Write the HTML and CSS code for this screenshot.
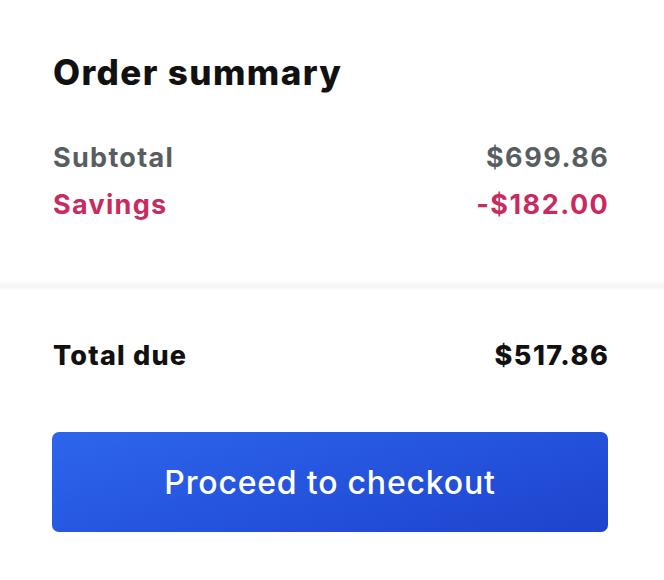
FILE: index.html
```html
<!DOCTYPE html>
<html>
<head>
<meta charset="utf-8">
<link rel="stylesheet" href="styles.css">
</head>
<body>
<div class="summary">
  <section class="top">
    <h1 class="title">Order summary</h1>
    <div class="row subtotal"><span>Subtotal</span><span>$699.86</span></div>
    <div class="row savings"><span>Savings</span><span>-$182.00</span></div>
  </section>
  <div class="divider"></div>
  <section class="bottom">
    <div class="row total"><span>Total due</span><span>$517.86</span></div>
    <button class="checkout">Proceed to checkout</button>
  </section>
</div>
</body>
</html>
```
FILE: styles.css
```css
html, body {
  margin: 0;
  padding: 0;
  background: #ffffff;
}
body {
  font-family: "Inter", "Liberation Sans", sans-serif;
  width: 664px;
  height: 580px;
  overflow: hidden;
}
.summary {
  display: flex;
  flex-direction: column;
}
.top {
  padding: 50px 56px 0 52px;
  height: 282px;
  box-sizing: border-box;
}
.title {
  margin: 0 0 40px 1px;
  font-size: 35px;
  font-weight: 800;
  color: #111111;
  line-height: 44px;
  letter-spacing: 1.4px;
}
.row {
  display: flex;
  justify-content: space-between;
  font-weight: 700;
  margin-left: 1px;
}
.row span:last-child {
  margin-right: -1.3px;
  letter-spacing: 1.5px;
}
.subtotal, .savings {
  font-size: 27px;
  line-height: 47px;
  letter-spacing: 1.3px;
}
.subtotal { color: #585e5f; }
.savings { color: #c92b60; }
.divider {
  height: 8px;
  background: linear-gradient(to bottom, #fafbfc, #f4f5f8 50%, #fbfbfd);
}
.bottom {
  padding: 49px 56px 0 52px;
  display: flex;
  flex-direction: column;
}
.total {
  font-size: 27px;
  line-height: 34px;
  color: #111111;
  font-weight: 800;
  letter-spacing: 1.2px;
}
.checkout {
  margin-top: 59px;
  height: 100px;
  border: none;
  border-radius: 7px;
  background: linear-gradient(165deg, #2d66eb 0%, #2656df 45%, #1e43cd 100%);
  color: #ffffff;
  font-family: "Inter", "Liberation Sans", sans-serif;
  font-size: 32px;
  font-weight: 500;
  letter-spacing: 0.8px;
  padding: 0;
}
```
